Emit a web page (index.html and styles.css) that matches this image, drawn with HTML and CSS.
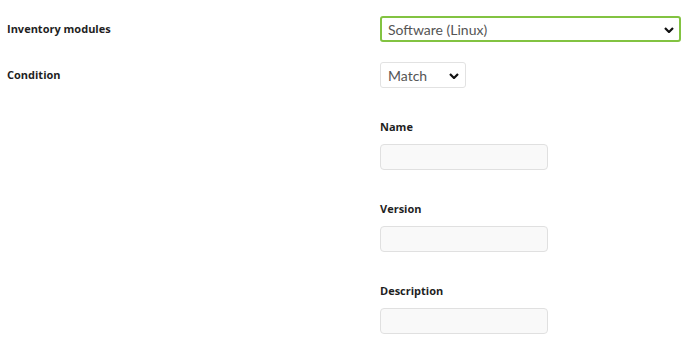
FILE: index.html
```html
<!DOCTYPE html>
<html lang="en">
<head>
    <meta charset="UTF-8">
    <meta name="viewport" content="width=device-width, initial-scale=1.0">
    <title>Inventory condition</title>
    <link rel="stylesheet" href="styles.css">
</head>
<body>
    <div class="form">
        <div class="row">
            <label class="row-label">Inventory modules</label>
            <div class="select-wrap wide">
                <select class="select focus">
                    <option>Software (Linux)</option>
                </select>
                <svg class="chevron" viewBox="0 0 10 6"><path d="M1 1l4 4 4-4" /></svg>
            </div>
        </div>

        <div class="row">
            <label class="row-label">Condition</label>
            <div class="fields">
                <div class="select-wrap small">
                    <select class="select">
                        <option>Match</option>
                    </select>
                    <svg class="chevron" viewBox="0 0 10 6"><path d="M1 1l4 4 4-4" /></svg>
                </div>

                <div class="field">
                    <label>Name</label>
                    <input type="text">
                </div>
                <div class="field">
                    <label>Version</label>
                    <input type="text">
                </div>
                <div class="field">
                    <label>Description</label>
                    <input type="text">
                </div>
            </div>
        </div>
    </div>
</body>
</html>
```

FILE: styles.css
```css
body {
    margin: 0;
    padding: 16px 7px 0;
    background: #fff;
    font-family: 'Open Sans', sans-serif;
    color: #1f1f1f;
}
.form {
    display: flex;
    flex-direction: column;
    gap: 20px;
}
.row {
    display: grid;
    grid-template-columns: 373px 1fr;
    align-items: start;
}
.row-label {
    font-size: 11px;
    font-weight: bold;
    line-height: 26px;
}
.select-wrap {
    position: relative;
}
.select-wrap.wide {
    width: 301px;
}
.select-wrap.small {
    width: 86px;
}
.select {
    appearance: none;
    -webkit-appearance: none;
    width: 100%;
    height: 26px;
    padding: 0 0 0 7px;
    margin: 0;
    font-family: 'Lato', sans-serif;
    font-size: 14px;
    color: #555;
    background: #fff;
    border: 1px solid #e2e2e2;
    border-radius: 3px;
    box-sizing: border-box;
}
.select.focus {
    border: 2px solid #82c341;
    padding-left: 6px;
}
.chevron {
    position: absolute;
    top: 11px;
    right: 7px;
    width: 10px;
    height: 6px;
    fill: none;
    stroke: #111;
    stroke-width: 2.2;
    pointer-events: none;
}
.fields {
    display: flex;
    flex-direction: column;
    gap: 31px;
}
.field label {
    display: block;
    font-size: 11px;
    font-weight: bold;
    line-height: 16px;
    margin-bottom: 9px;
}
.field input {
    display: block;
    width: 168px;
    height: 26px;
    margin: 0;
    border: 1px solid #e0e0e0;
    border-radius: 4px;
    background: #f9f9f9;
    box-sizing: border-box;
}
```
